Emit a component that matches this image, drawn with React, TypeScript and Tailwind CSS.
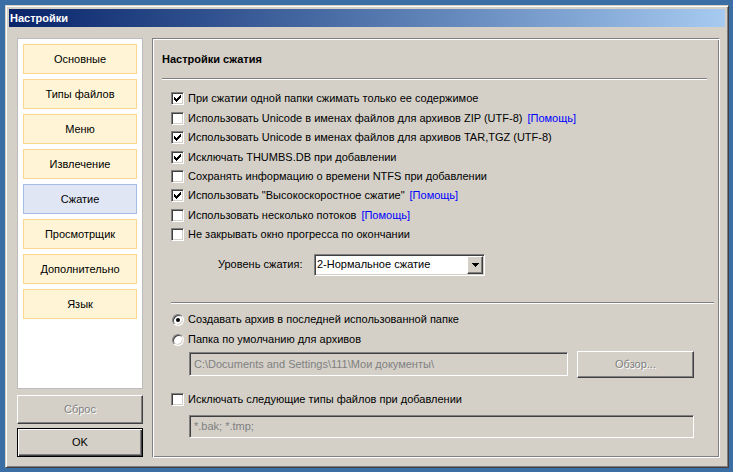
import React from 'react';

// classic 3D helpers
const raised = 'border border-t-white border-l-white border-b-[#404040] border-r-[#404040] shadow-[inset_-1px_-1px_0_#808080]';
const sunken = 'border border-t-[#808080] border-l-[#808080] border-b-white border-r-white shadow-[inset_1px_1px_0_#404040,inset_-1px_-1px_0_#d4d0c8]';

const tabs = ['Основные', 'Типы файлов', 'Меню', 'Извлечение', 'Сжатие', 'Просмотрщик', 'Дополнительно', 'Язык'];

const options: { label: string; checked: boolean; help?: boolean }[] = [
  { label: 'При сжатии одной папки сжимать только ее содержимое', checked: true },
  { label: 'Использовать Unicode в именах файлов для архивов ZIP (UTF-8)', checked: false, help: true },
  { label: 'Использовать Unicode в именах файлов для архивов TAR,TGZ (UTF-8)', checked: true },
  { label: 'Исключать THUMBS.DB при добавлении', checked: true },
  { label: 'Сохранять информацию о времени NTFS при добавлении', checked: false },
  { label: 'Использовать "Высокоскоростное сжатие"', checked: true, help: true },
  { label: 'Использовать несколько потоков', checked: false, help: true },
  { label: 'Не закрывать окно прогресса по окончании', checked: false },
];

function CheckBox({ checked }: { checked: boolean }) {
  return (
    <span className={`relative block w-[13px] h-[13px] shrink-0 bg-white ${sunken}`}>
      {checked && (
        <svg className="absolute left-[2px] top-[2px]" width="7" height="7" viewBox="0 0 7 7" shapeRendering="crispEdges">
          <path d="M6 0h1v1h-1z M5 1h2v1h-2z M0 2h1v1h-1z M4 2h3v1h-3z M0 3h2v1h-2z M3 3h3v1h-3z M0 4h5v1h-5z M1 5h3v1h-3z M2 6h1v1h-1z" fill="#000" />
        </svg>
      )}
    </span>
  );
}

function Radio({ checked }: { checked: boolean }) {
  return (
    <span className="relative flex items-center justify-center w-[12px] h-[12px] shrink-0 rounded-full bg-white border border-t-[#808080] border-l-[#808080] border-b-white border-r-white shadow-[inset_1px_1px_0_#404040,inset_-1px_-1px_0_#d4d0c8]">
      {checked && <span className="block w-[4px] h-[4px] rounded-full bg-black" />}
    </span>
  );
}

function Separator({ className }: { className: string }) {
  return <div className={`h-[2px] border-t border-t-[#808080] border-b border-b-white ${className}`} />;
}

export default function App() {
  return (
    <div className="w-[733px] h-[472px] bg-[#3a6ea5] pt-[5px] pl-[5px] font-['Liberation_Sans',Arial,sans-serif] text-[11px] leading-[13px] text-black">
      <div className="w-[724px] h-[463px] flex flex-col bg-[#d4d0c8] p-[3px] border border-t-[#d4d0c8] border-l-[#d4d0c8] border-b-[#404040] border-r-[#404040] shadow-[inset_1px_1px_0_#fff,inset_-1px_-1px_0_#808080]">
        {/* title bar */}
        <div className="h-[18px] flex items-center pl-[1px] bg-gradient-to-r from-[#0a246a] to-[#a6caf0] text-white font-bold">
          Настройки
        </div>

        <div className="flex-1 flex gap-[9px] pl-[8px] pr-[5px] pt-[11px] pb-[6px]">
          {/* left column */}
          <div className="w-[126px] flex flex-col">
            <div className="h-[351px] bg-white border border-[#bcbcbc] p-[5px] flex flex-col gap-[5px]">
              {tabs.map((t) => (
                <div
                  key={t}
                  className={`h-[30px] flex items-center justify-center border ${
                    t === 'Сжатие' ? 'bg-[#e0e6f4] border-[#a5bde6]' : 'bg-[#fff5d6] border-[#fdd78c]'
                  }`}
                >
                  {t}
                </div>
              ))}
            </div>
            <button className={`mt-[6px] h-[29px] flex items-center justify-center bg-[#d4d0c8] text-[#808080] [text-shadow:1px_1px_0_#fff] ${raised}`}>
              Сброс
            </button>
            <button className="mt-[4px] h-[29px] flex items-center justify-center bg-[#d4d0c8] border border-black shadow-[inset_1px_1px_0_#fff,inset_-1px_-1px_0_#404040,inset_-2px_-2px_0_#808080]">
              OK
            </button>
          </div>

          {/* right panel */}
          <div className="flex-1 flex flex-col pl-[9px] pt-[14px] border border-t-[#808080] border-l-[#808080] border-b-white border-r-white shadow-[inset_1px_1px_0_#fff,inset_-1px_-1px_0_#808080]">
            <div className="font-bold">Настройки сжатия</div>
            <Separator className="mt-[12px] w-[545px]" />

            <div className="mt-[9px] ml-[9px] flex flex-col">
              {options.map((o) => (
                <div key={o.label} className="h-[19.45px] flex items-center">
                  <CheckBox checked={o.checked} />
                  <span className="ml-[4px]">{o.label}</span>
                  {o.help && <span className="ml-[5px] text-[#0000ff]">[Помощь]</span>}
                </div>
              ))}
            </div>

            <div className="mt-[9px] ml-[56px] flex items-center">
              <span className="w-[96px]">Уровень сжатия:</span>
              <div className={`w-[171px] h-[22px] flex items-center bg-white ${sunken}`}>
                <span className="flex-1 pl-[2px]">2-Нормальное сжатие</span>
                <span className={`w-[16px] h-[18px] mr-[1px] flex items-center justify-center bg-[#d4d0c8] ${raised}`}>
                  <svg width="7" height="4" viewBox="0 0 7 4" shapeRendering="crispEdges">
                    <path d="M0 0h7v1h-7z M1 1h5v1h-5z M2 2h3v1h-3z M3 3h1v1h-1z" fill="#000" />
                  </svg>
                </span>
              </div>
            </div>

            <Separator className="mt-[26px] ml-[9px] w-[543px]" />

            <div className="mt-[6px] ml-[10px] flex flex-col">
              <div className="h-[20px] flex items-center">
                <Radio checked />
                <span className="ml-[4px]">Создавать архив в последней использованной папке</span>
              </div>
              <div className="h-[20px] flex items-center">
                <Radio checked={false} />
                <span className="ml-[4px]">Папка по умолчанию для архивов</span>
              </div>
            </div>

            <div className="mt-[1px] ml-[27px] flex items-center h-[27px]">
              <div className={`w-[379px] h-[24px] flex items-center pl-[4px] bg-[#d4d0c8] text-[#808080] ${sunken}`}>
                C:\Documents and Settings\111\Мои документы\
              </div>
              <button className={`ml-[9px] w-[117px] h-[27px] flex items-center justify-center bg-[#d4d0c8] text-[#808080] [text-shadow:1px_1px_0_#fff] ${raised}`}>
                Обзор...
              </button>
            </div>

            <div className="mt-[12px] ml-[9px] h-[20px] flex items-center">
              <CheckBox checked={false} />
              <span className="ml-[4px]">Исключать следующие типы файлов при добавлении</span>
            </div>

            <div className={`mt-[5px] ml-[27px] w-[505px] h-[23px] flex items-center pl-[4px] bg-[#d4d0c8] text-[#808080] ${sunken}`}>
              *.bak; *.tmp;
            </div>
          </div>
        </div>
      </div>
    </div>
  );
}
